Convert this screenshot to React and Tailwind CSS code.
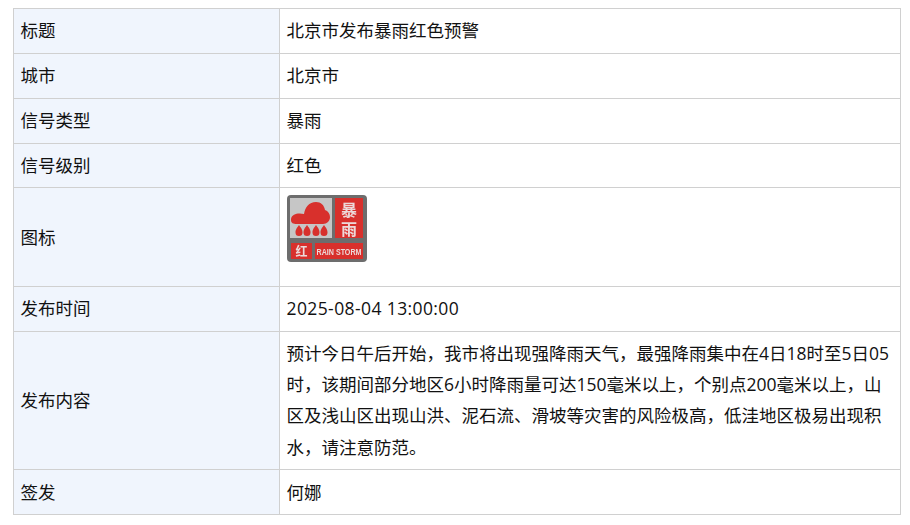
import React from "react";

const cellLabel = "border border-[#d0d0d0] bg-[#f0f5fd] px-[6.4px] py-[6.33px] text-left font-normal align-middle";
const cellValue = "border border-[#d0d0d0] px-[6.4px] py-[6.33px] text-left align-middle";

const cjk = "'Noto Sans CJK SC', sans-serif";

const Drop = ({ x }) => (
  <path d={`M${x} 30c-3 4-3.5 5.5-3.5 7.5a3.5 3.5 0 0 0 7 0c0-2-.5-3.5-3.5-7.5z`} fill="#d8302c" />
);

const RainStormIcon = () => (
  <svg width="80" height="67" viewBox="0 0 80 67" className="block blur-[0.5px]">
    <rect x="0" y="0" width="80" height="67" rx="4" fill="#6d6d6d" />
    <rect x="3" y="3" width="42" height="40" fill="#c6c6c6" />
    <path
      d="M4 25c0-4 3-6 7-6.500 2-.3 4 0 6 .5 1-7 5-12 12-12 5 0 8 3 9 8 3 1 5 4 5 7 0 4-3 7-7 7H10c-4 0-6-1-6-4z"
      fill="#d8302c"
    />
    <Drop x={12} />
    <Drop x={20} />
    <Drop x={29} />
    <Drop x={37} />
    <rect x="48" y="3" width="28" height="40" fill="#d8302c" />
    <text x="62" y="21" textAnchor="middle" fontSize="16" fontWeight="700" fill="#ecd9d9" fontFamily={cjk}>暴</text>
    <text x="62" y="40" textAnchor="middle" fontSize="16" fontWeight="700" fill="#ecd9d9" fontFamily={cjk}>雨</text>
    <rect x="4" y="48" width="21" height="16" fill="#d8302c" />
    <text x="14.5" y="60.500" textAnchor="middle" fontSize="12" fontWeight="700" fill="#ecd9d9" fontFamily={cjk}>红</text>
    <rect x="28" y="48" width="48" height="16" fill="#d8302c" />
    <text
      x="0"
      y="0"
      transform="translate(52 60) scale(0.75 1)"
      textAnchor="middle"
      fontSize="9.5"
      fontWeight="700"
      fill="#ecd9d9"
      fontFamily="'Liberation Sans', sans-serif"
    >
      RAIN STORM
    </text>
  </svg>
);

const rows = [
  ["标题", "北京市发布暴雨红色预警"],
  ["城市", "北京市"],
  ["信号类型", "暴雨"],
  ["信号级别", "红色"],
  ["图标", <RainStormIcon />],
  ["发布时间", <span className="tracking-[0.4px]">2025-08-04 13:00:00</span>],
  [
    "发布内容",
    "预计今日午后开始，我市将出现强降雨天气，最强降雨集中在4日18时至5日05时，该期间部分地区6小时降雨量可达150毫米以上，个别点200毫米以上，山区及浅山区出现山洪、泥石流、滑坡等灾害的风险极高，低洼地区极易出现积水，请注意防范。",
  ],
  ["签发", "何娜"],
];

export default function App() {
  return (
    <div className="bg-white min-h-screen pt-[8px] px-[13px] text-[17.5px] leading-[31.2px] text-[#111] font-['Open_Sans','Noto_Sans_CJK_SC',sans-serif]">
      <table className="w-[888px] border-collapse table-fixed">
        <colgroup>
          <col className="w-[30%]" />
          <col />
        </colgroup>
        <tbody>
          {rows.map(([label, value]) => (
            <tr key={label}>
              <th className={cellLabel}>{label}</th>
              <td className={cellValue}>
                {label === "图标" ? <div className="pb-[17.8px] pl-px">{value}</div> : value}
              </td>
            </tr>
          ))}
        </tbody>
      </table>
    </div>
  );
}
